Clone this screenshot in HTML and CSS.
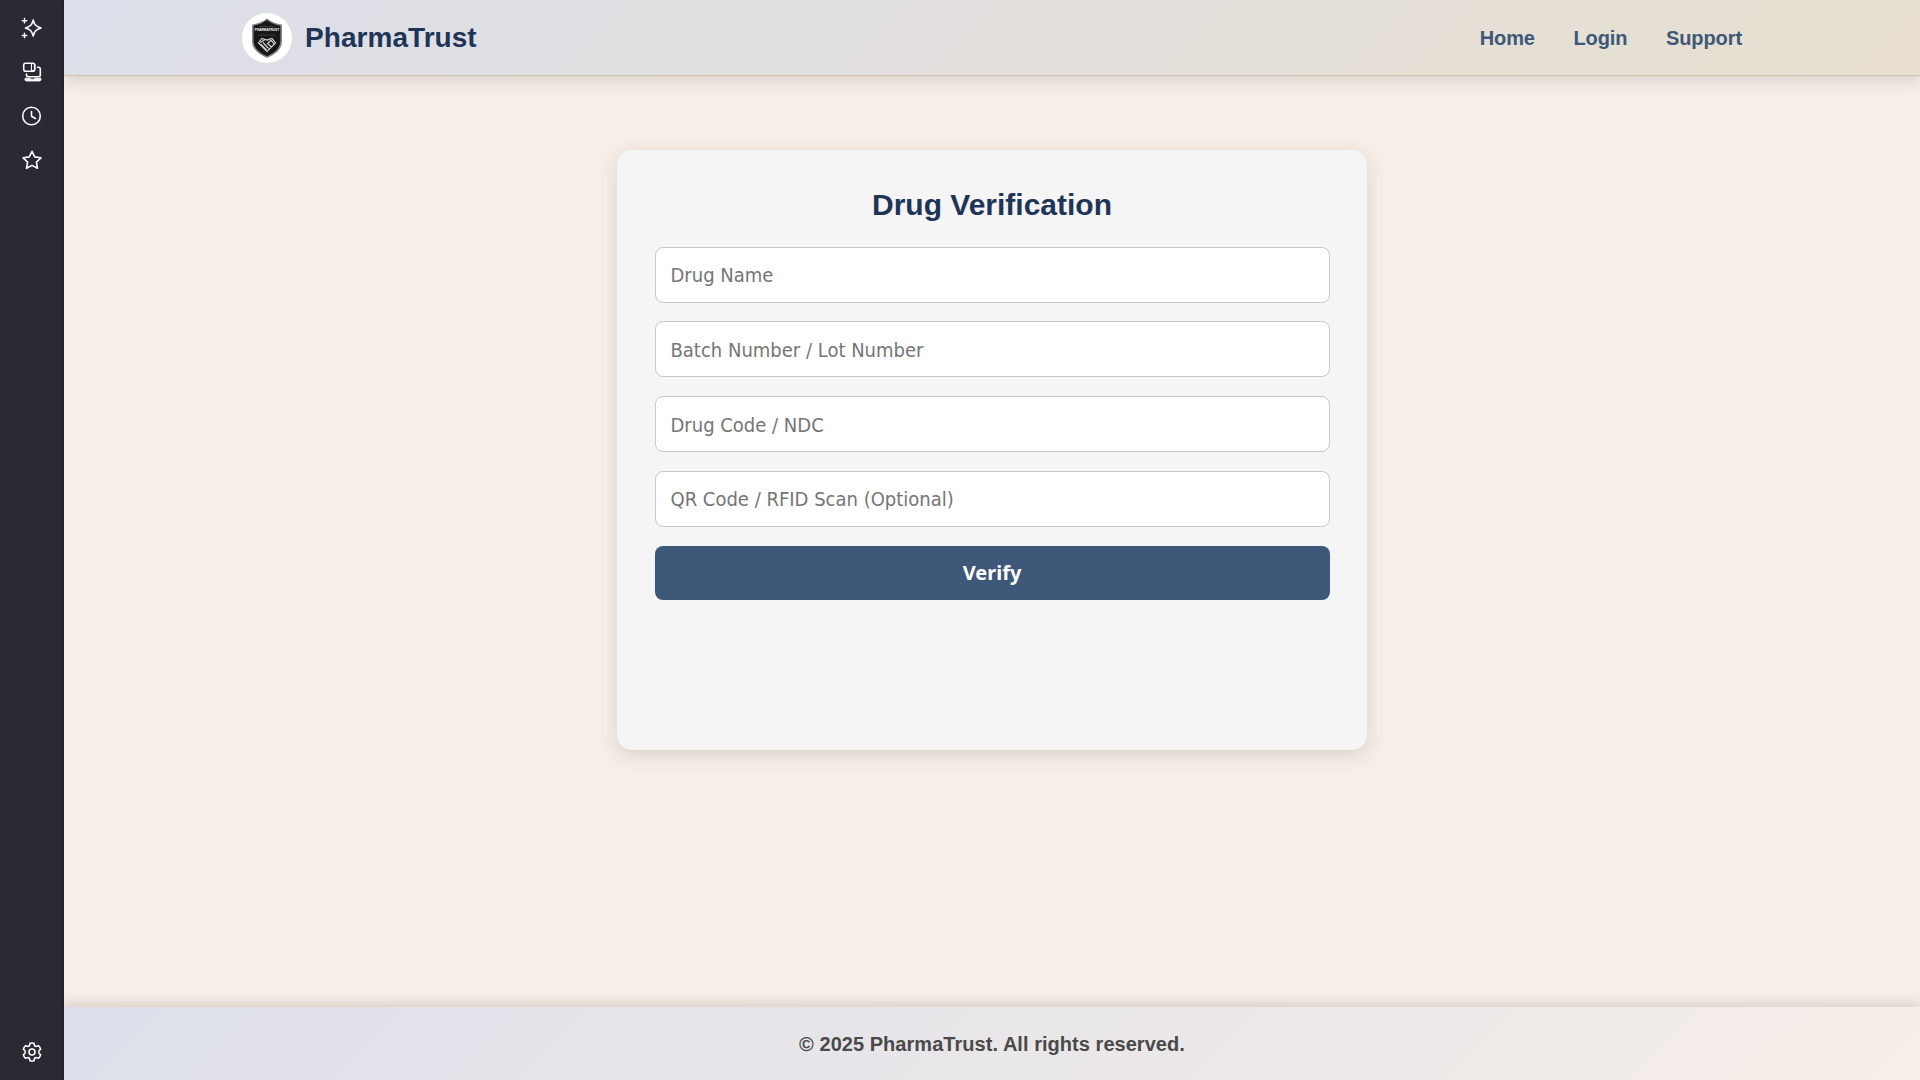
FILE: index.html
```html
<!DOCTYPE html>
<html lang="en">
<head>
<meta charset="utf-8">
<title>PharmaTrust</title>
<link rel="stylesheet" href="styles.css">
</head>
<body>
<div class="layout">
  <aside class="sidebar">
    <svg class="side-icon" viewBox="0 0 20 20"><path d="M11.2 2c1.300 5 2.700 6.500 7.800 8-5.100 1.500-6.500 3-7.800 8-1.300-5-2.600-6.500-7.700-8 5.100-1.500 6.400-3 7.700-8z"/><path d="M2.500.5v4.400M.3 2.700h4.400M2.500 15.300v4.400M.3 17.500h4.400" stroke-width="1.400"/></svg>
    <svg class="side-icon" viewBox="0 0 20 20"><rect x="1.700" y="1.200" width="11" height="8" rx="2"/><path d="M9.500 1.500h2.300q1 0 1 1v5.300q0 1-1 1H9.500z" stroke-width="1.100"/><path d="M15.500 5.200h1q1.800 0 1.800 1.800v6q0 1.700-1.800 1.700H6.300q-1.800 0-1.800-1.700v-1"/><path d="M3.500 16.200h4.600l.8 1h3.200l.8-1H19v1.200q0 1.600-1.700 1.600H4.500q-1.600 0-1.600-1.600z" class="solid"/></svg>
    <svg class="side-icon" viewBox="0 0 20 20"><circle cx="9.500" cy="10" r="8.800"/><path d="M9.500 5.500v4.700l4 2.300"/></svg>
    <svg class="side-icon" viewBox="0 0 20 20"><path d="M10 1.300l2.700 5.600 6.200.9-4.500 4.300 1.100 6.200-5.500-2.900-5.500 2.900 1.100-6.200L1.100 7.800l6.200-.9z"/></svg>
    <svg class="side-icon settings" viewBox="0 0 20 20"><path d="M8 1.300q2-.6 4 0l.5 2.200q.7 1.100 2 .8l2.100-.6q1.500 1.500 2 3.500L17 8.800q-.7 1.200 0 2.400l1.600 1.600q-.5 2-2 3.500l-2.100-.6q-1.300-.3-2 .8l-.5 2.200q-2 .6-4 0l-.5-2.200q-.7-1.100-2-.8l-2.100.6q-1.500-1.500-2-3.500L3 11.200q.7-1.200 0-2.400L1.400 7.200q.5-2 2-3.500l2.100.6q1.300.3 2-.8z"/><circle cx="10" cy="10" r="3"/></svg>
  </aside>
  <div class="page">
    <header class="header">
      <div class="brand">
        <svg class="logo" viewBox="0 0 50 50">
          <circle cx="25" cy="25" r="25" fill="#fff"/>
          <path d="M25 5.500c4.500 3.500 9 5 15 6v17c0 7-5.500 12.500-15 16.500-9.500-4-15-9.500-15-16.500v-17c6-1 10.500-2.500 15-6z" fill="#888"/>
          <path d="M25 7c4.500 3.300 8.500 4.800 13.400 5.700V28c0 6.500-4.900 11.500-13.400 15.300C16.500 39.500 11.600 34.500 11.600 28V12.700C16.500 11.800 20.500 10.300 25 7z" fill="#171717"/>
          <path d="M17 13.500h16M16 22h18" stroke="#444" stroke-width=".8"/>
          <text x="25" y="18.300" class="logo-text">PHARMATRUST</text>
          <path d="M20 25.500l5 1.500 5-1.500 3.500 4.500-8.500 8.500-8.500-8.500zM18.500 29.500l4-2.500M18.500 31l6 6M21 29.500l5.500 6M29 27.500l-3.500 3 4 3.500M29 27l3 4" fill="none" stroke="#d5d5d5" stroke-width="1.200"/>
        </svg>
        <span class="brand-name">PharmaTrust</span>
      </div>
      <nav class="nav"><a>Home</a><a>Login</a><a>Support</a></nav>
    </header>
    <main class="main">
      <section class="card">
        <h1 class="title">Drug Verification</h1>
        <form class="form">
          <input class="field" placeholder="Drug Name">
          <input class="field" placeholder="Batch Number / Lot Number">
          <input class="field" placeholder="Drug Code / NDC">
          <input class="field" placeholder="QR Code / RFID Scan (Optional)">
          <button class="verify" type="button">Verify</button>
        </form>
      </section>
    </main>
    <footer class="footer">© 2025 PharmaTrust. All rights reserved.</footer>
  </div>
</div>
</body>
</html>
```
FILE: styles.css
```css
* { box-sizing: border-box; }
body { margin: 0; font-family: "Liberation Sans", Arial, sans-serif; font-size: 20px; }
.layout { display: flex; height: 1080px; overflow: hidden; }
.sidebar { width: 64px; flex: none; background: #2b2932; border-right: 2px solid #25232b; display: flex; flex-direction: column; align-items: center; gap: 24px; padding: 18px 0 18px 2px; }
.side-icon { width: 20px; height: 20px; fill: none; stroke: #fbfbfe; stroke-width: 1.600; stroke-linejoin: round; stroke-linecap: round; overflow: visible; }
.side-icon .solid { fill: #fbfbfe; stroke-width: .8; }
.settings { margin-top: auto; }
.page { flex: 1; display: flex; flex-direction: column; background: #f6eee8; }
.header { height: 76px; flex: none; display: flex; align-items: center; justify-content: space-between; padding: 0 178px; background: linear-gradient(135deg, #dcdfea, #e8dfcf); border-bottom: 1px solid #d0c4b0; box-shadow: 0 4px 15px rgba(70, 70, 50, .18); z-index: 1; }
.brand { display: flex; align-items: center; gap: 13px; }
.logo { width: 50px; height: 50px; }
.logo-text { font-size: 3.200px; font-weight: bold; fill: #fff; text-anchor: middle; }
.brand-name { font-size: 28px; font-weight: bold; color: #1f3558; letter-spacing: .05px; }
.nav { display: flex; gap: 38.500px; padding-top: 2px; font-weight: bold; color: #3d5878; letter-spacing: -.08px; }
.main { flex: 1; display: flex; flex-direction: column; align-items: center; padding-top: 74px; }
.card { width: 750px; height: 600px; border-radius: 15px; background: #f5f5f5; padding: 37px 37.500px; box-shadow: 0 5px 19px rgba(80, 75, 40, .16); }
.title { margin: 0 0 24.600px; height: 35px; line-height: 35px; font-size: 30px; text-align: center; color: #1f3558; }
.form { display: flex; flex-direction: column; gap: 18.750px; }
.field { height: 56px; border: 1px solid #c8c8c8; border-radius: 8px; background: #fff; padding: 1px 14px 0 15px; font: 20px "DejaVu Sans Condensed", Tahoma, sans-serif; outline: 0; }
.field::placeholder { color: #757575; opacity: 1; }
.verify { height: 54px; border: 0; border-radius: 8px; background: #3d5878; color: #fff; font: bold 20px "Noto Sans", Tahoma, sans-serif; }
.footer { height: 73px; flex: none; display: flex; align-items: center; justify-content: center; padding-top: 1px; font-weight: bold; color: #4a4a4a; letter-spacing: .04px; background: linear-gradient(135deg, #dcdfea, #f6eee8); box-shadow: 0 -3px 12px rgba(70, 70, 50, .2); }
```
